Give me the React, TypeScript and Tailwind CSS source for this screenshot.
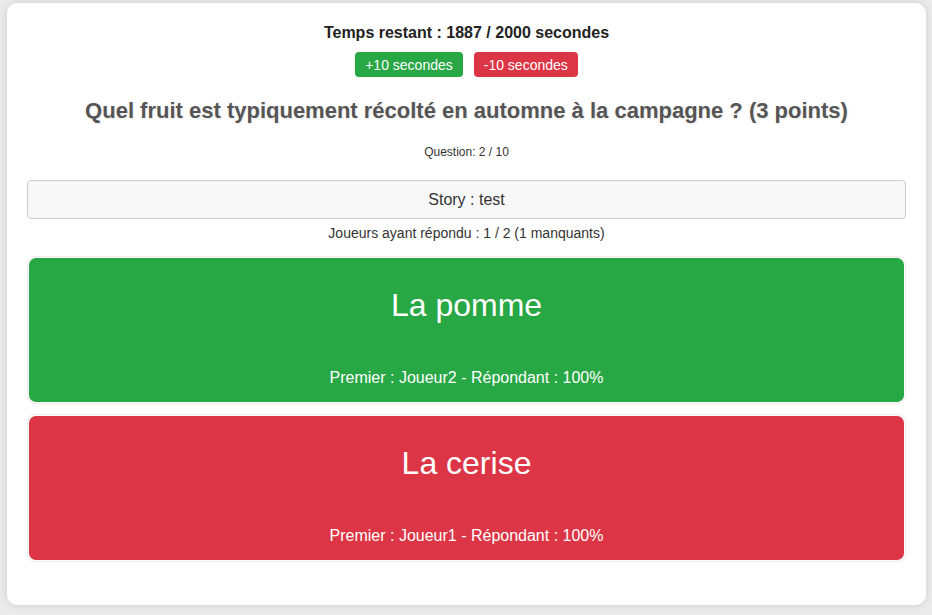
import React from "react";

function Answer({ label, first, color }: { label: string; first: string; color: string }) {
  return (
    <div className="rounded-[8px] border border-[#ececec] p-[1px]">
      <div
        className={`${color} rounded-[7px] text-white text-center flex flex-col items-center pt-[28px] pb-[15px]`}
      >
        <div className="text-[32px] leading-[38px]">{label}</div>
        <div className="mt-[45px] text-[16px] leading-[18px]">
          Premier : {first} - Répondant : 100%
        </div>
      </div>
    </div>
  );
}

export default function App() {
  return (
    <div
      className="w-[932px] h-[615px] bg-[#ebebeb] pt-[3px] pl-[7px] overflow-hidden"
      style={{ fontFamily: '"Liberation Sans", Arial, sans-serif' }}
    >
      <div className="w-[919px] h-[602px] bg-white rounded-[10px] shadow-[0_0_8px_rgba(0,0,0,0.12)] px-[20px] pt-[21px] pb-[45px] text-center text-[#333]">
        <div className="text-[16px] leading-[18px] font-bold text-[#222]">
          Temps restant : 1887 / 2000 secondes
        </div>
        <div className="mt-[10px] flex justify-center gap-[11px]">
          <button className="bg-[#28a745] text-white text-[14px] leading-[17px] px-[10px] pt-[5px] pb-[3px] rounded-[4px]">
            +10 secondes
          </button>
          <button className="bg-[#dc3545] text-white text-[14px] leading-[17px] px-[10px] pt-[5px] pb-[3px] rounded-[4px]">
            -10 secondes
          </button>
        </div>
        <h2 className="mt-[21px] text-[22px] leading-[26px] font-bold text-[#555] [text-shadow:1px_1px_2px_rgba(0,0,0,0.1)]">
          Quel fruit est typiquement récolté en automne à la campagne ? (3 points)
        </h2>
        <div className="mt-[21px] text-[12px] leading-[14px] text-[#333]">Question: 2 / 10</div>
        <div className="mt-[21px] border border-[#cccccc] bg-[#f8f8f8] rounded-[4px] pt-[10px] pb-[9px] text-[16px] leading-[18px] text-[#333]">
          Story : test
        </div>
        <div className="mt-[6px] text-[14px] leading-[16px] text-[#333]">
          Joueurs ayant répondu : 1 / 2 (1 manquants)
        </div>
        <div className="mt-[15px] flex flex-col gap-[10px]">
          <Answer label="La pomme" first="Joueur2" color="bg-[#28a745]" />
          <Answer label="La cerise" first="Joueur1" color="bg-[#dc3545]" />
        </div>
      </div>
    </div>
  );
}
